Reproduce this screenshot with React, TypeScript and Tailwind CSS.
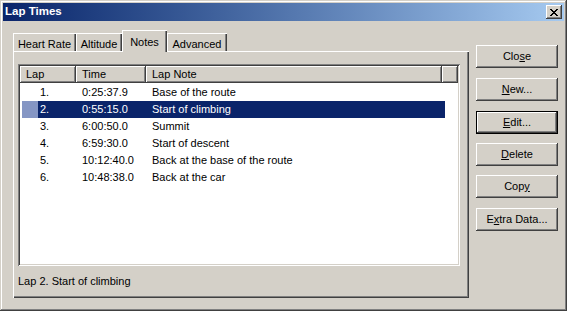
const raised =
  'shadow-[inset_-1px_-1px_#404040,inset_1px_1px_#ffffff,inset_-2px_-2px_#808080]'

const laps = [
  { n: '1.', time: '0:25:37.9', note: 'Base of the route' },
  { n: '2.', time: '0:55:15.0', note: 'Start of climbing' },
  { n: '3.', time: '6:00:50.0', note: 'Summit' },
  { n: '4.', time: '6:59:30.0', note: 'Start of descent' },
  { n: '5.', time: '10:12:40.0', note: 'Back at the base of the route' },
  { n: '6.', time: '10:48:38.0', note: 'Back at the car' },
]

const selected = 1

function CloseGlyph() {
  // marlett style close cross, 8x7 px
  const px = [
    [0, 0], [1, 0], [6, 0], [7, 0],
    [1, 1], [2, 1], [5, 1], [6, 1],
    [2, 2], [3, 2], [4, 2], [5, 2],
    [3, 3], [4, 3],
    [2, 4], [3, 4], [4, 4], [5, 4],
    [1, 5], [2, 5], [5, 5], [6, 5],
    [0, 6], [1, 6], [6, 6], [7, 6],
  ]
  return (
    <svg width="8" height="7" viewBox="0 0 8 7" shapeRendering="crispEdges">
      {px.map(([x, y]) => (
        <rect key={`${x}-${y}`} x={x} y={y} width="1" height="1" fill="#000" />
      ))}
    </svg>
  )
}

function Tab({ label, width, active }: { label: string; width: string; active?: boolean }) {
  if (active) {
    return (
      <div
        className={`${width} relative z-10 -mb-px flex h-[22px] items-start justify-center bg-[#d4d0c8] pt-[4px] shadow-[inset_1px_1px_#ffffff,inset_-1px_0_#404040,inset_-2px_0_#808080]`}
      >
        {label}
      </div>
    )
  }
  return (
    <div
      className={`${width} flex h-[18px] items-start justify-center pt-[3px] shadow-[inset_1px_1px_#ffffff,inset_-1px_0_#404040,inset_-2px_0_#808080]`}
    >
      {label}
    </div>
  )
}

function HeaderCell({ label, width }: { label: string; width: string }) {
  return (
    <div
      className={`${width} h-full shrink-0 pl-[6px] leading-[16px] shadow-[inset_-1px_-1px_#404040,inset_1px_1px_#ffffff,inset_-2px_-2px_#808080]`}
    >
      {label}
    </div>
  )
}

function Button({ children, top, isDefault }: { children: React.ReactNode; top: string; isDefault?: boolean }) {
  return (
    <button
      className={`${top} flex h-[23px] w-[82px] items-center justify-center bg-[#d4d0c8] ${
        isDefault ? 'border border-black shadow-[inset_-1px_-1px_#404040,inset_1px_1px_#ffffff,inset_-2px_-2px_#808080]' : raised
      }`}
    >
      <span>{children}</span>
    </button>
  )
}

export default function App() {
  return (
    <div
      className="flex h-[311px] w-[567px] flex-col bg-[#d4d0c8] p-[3px] text-[11px] text-black shadow-[inset_-1px_-1px_#404040,inset_1px_1px_#d4d0c8,inset_-2px_-2px_#808080,inset_2px_2px_#ffffff]"
      style={{ fontFamily: '"Liberation Sans", Arial, sans-serif' }}
    >
      {/* title bar */}
      <div className="flex h-[18px] shrink-0 items-center justify-between bg-gradient-to-r from-[#0a246a] to-[#a6caf0] pl-[2px] pr-[2px]">
        <span className="text-[11.5px] font-bold text-white">Lap Times</span>
        <div className={`flex h-[14px] w-[16px] items-center justify-center bg-[#d4d0c8] ${raised}`}>
          <CloseGlyph />
        </div>
      </div>

      <div className="flex pl-[10px] pt-[9px]">
        {/* tab control */}
        <div className="flex w-[456px] flex-col">
          <div className="flex h-[21px] items-end">
            <Tab label="Heart Rate" width="w-[63px]" />
            <Tab label="Altitude" width="w-[46px]" />
            <Tab label="Notes" width="w-[45px]" active />
            <Tab label="Advanced" width="w-[60px]" />
          </div>
          <div className="flex h-[247px] flex-col pl-[5px] pt-[13px] shadow-[inset_1px_1px_#ffffff,inset_-1px_-1px_#404040,inset_-2px_-2px_#808080]">
            <div className="h-[202px] w-[442px] bg-white p-[2px] shadow-[inset_1px_1px_#808080,inset_-1px_-1px_#ffffff,inset_2px_2px_#404040,inset_-2px_-2px_#d4d0c8]">
              <div className="flex h-[17px] bg-[#d4d0c8]">
                <HeaderCell label="Lap" width="w-[56px]" />
                <HeaderCell label="Time" width="w-[70px]" />
                <HeaderCell label="Lap Note" width="w-[296px]" />
                <HeaderCell label="" width="w-[16px]" />
              </div>
              <div className="pt-px">
                {laps.map((lap, i) => {
                  const sel = i === selected
                  return (
                    <div key={lap.n} className="ml-[2px] flex h-[17px] w-[423px] items-center">
                      <div className={`h-full w-[16px] ${sel ? 'bg-[#8596c4]' : ''}`} />
                      <div className={`flex h-full flex-1 items-center ${sel ? 'bg-[#0a246a] text-white' : ''}`}>
                        <span className="w-[38px] pl-[2px]">{lap.n}</span>
                        <span className="w-[70px] pl-[6px]">{lap.time}</span>
                        <span className="pl-[6px]">{lap.note}</span>
                      </div>
                    </div>
                  )
                })}
              </div>
            </div>
            <div className="mt-[9px] leading-[13px]">Lap 2. Start of climbing</div>
          </div>
        </div>

        {/* buttons */}
        <div className="ml-[7px] flex flex-col pt-[15px]">
          <Button top="mt-0">
            Clo<span className="underline">s</span>e
          </Button>
          <Button top="mt-[10px]">
            <span className="underline">N</span>ew...
          </Button>
          <Button top="mt-[10px]" isDefault>
            <span className="underline">E</span>dit...
          </Button>
          <Button top="mt-[9px]">
            <span className="underline">D</span>elete
          </Button>
          <Button top="mt-[9px]">
            Cop<span className="underline">y</span>
          </Button>
          <Button top="mt-[10px]">
            E<span className="underline">x</span>tra Data...
          </Button>
        </div>
      </div>
    </div>
  )
}
